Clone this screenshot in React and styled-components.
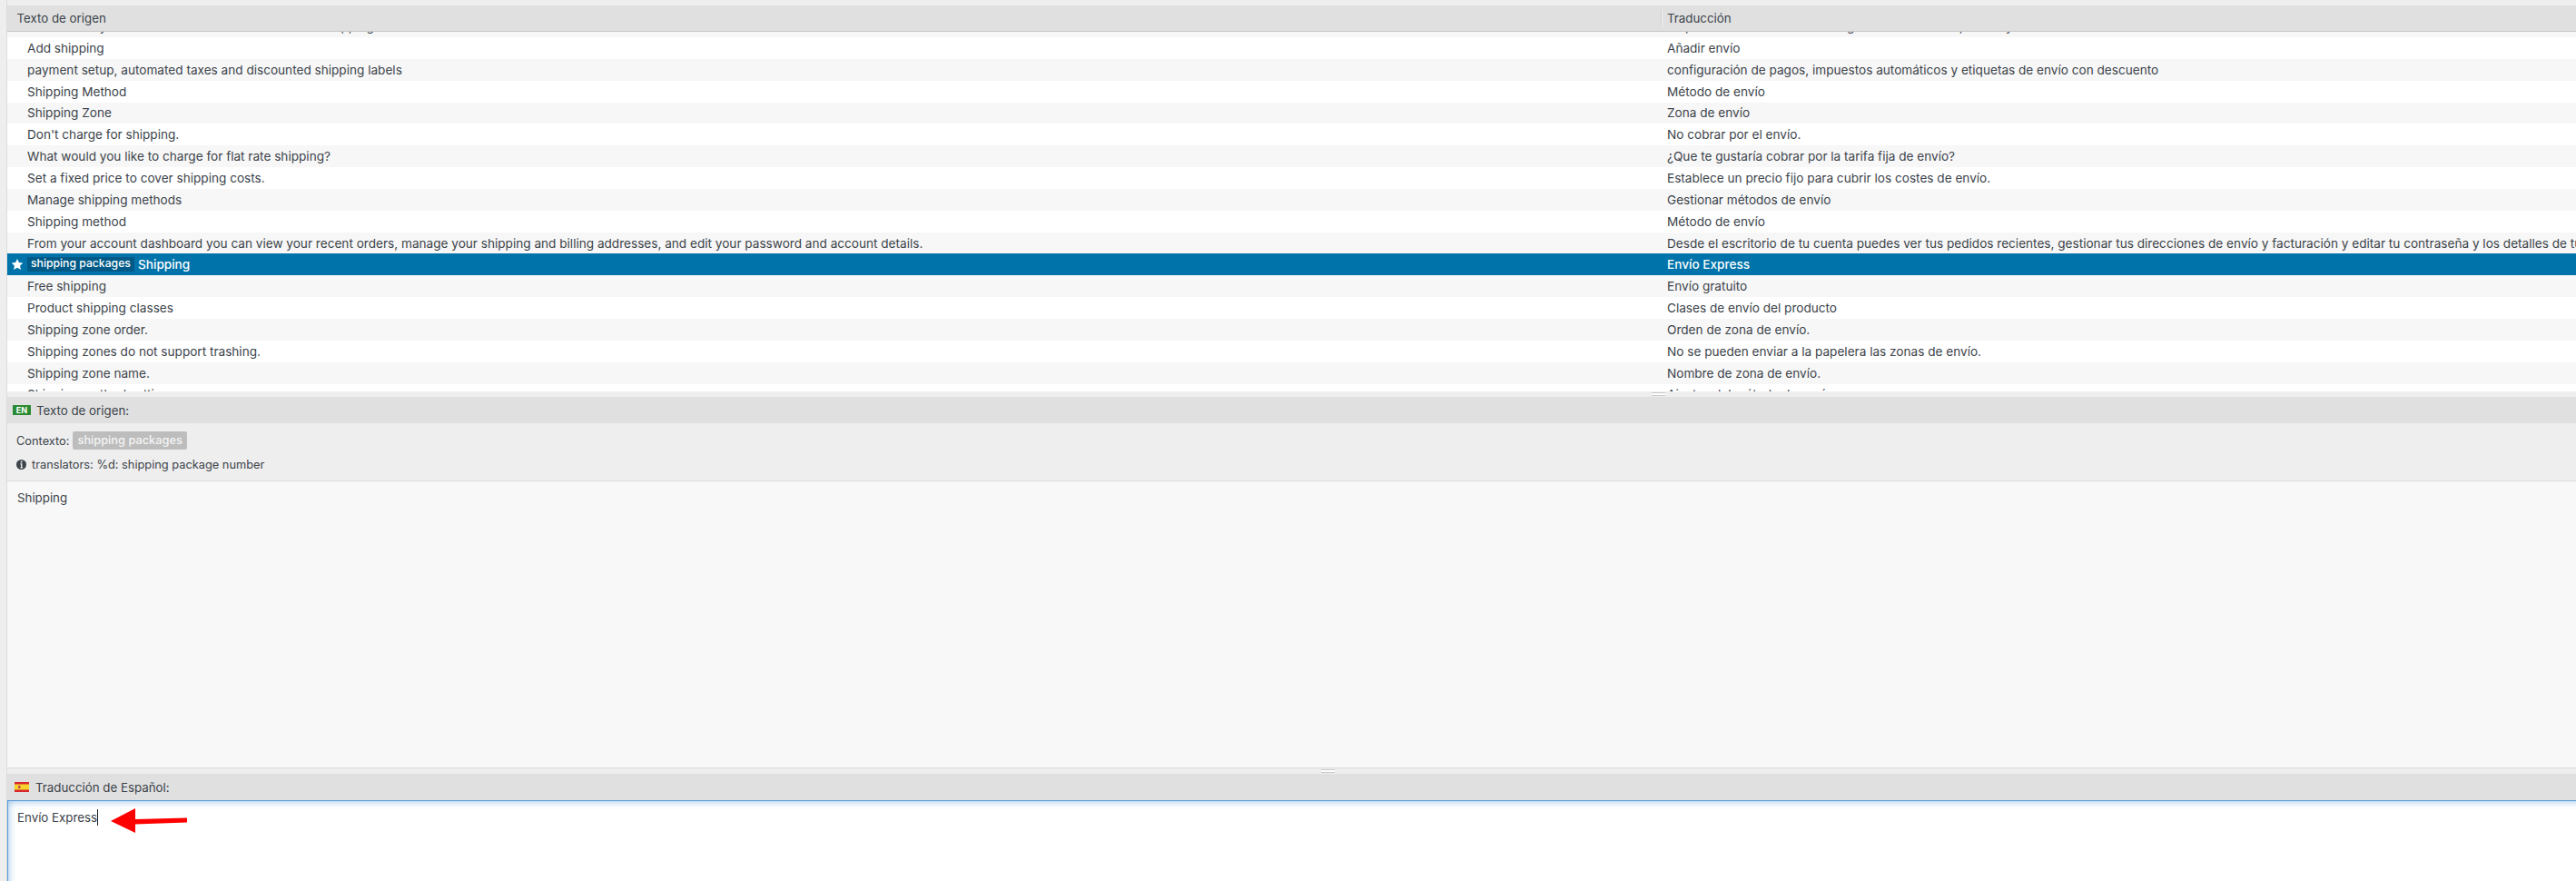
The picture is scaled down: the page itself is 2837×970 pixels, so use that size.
import React from 'react';
import styled, { createGlobalStyle } from 'styled-components';

const ROWS = [
  [
    'Decide how you like to add costs to each order for shipping and the total at checkout',
    'Empieza a vender en toda la región con tarifas de precios y los métodos de envío en cada zona',
  ],
  ['Add shipping', 'Añadir envío'],
  ['payment setup, automated taxes and discounted shipping labels', 'configuración de pagos, impuestos automáticos y etiquetas de envío con descuento'],
  ['Shipping Method', 'Método de envío'],
  ['Shipping Zone', 'Zona de envío'],
  ["Don't charge for shipping.", 'No cobrar por el envío.'],
  ['What would you like to charge for flat rate shipping?', '¿Que te gustaría cobrar por la tarifa fija de envío?'],
  ['Set a fixed price to cover shipping costs.', 'Establece un precio fijo para cubrir los costes de envío.'],
  ['Manage shipping methods', 'Gestionar métodos de envío'],
  ['Shipping method', 'Método de envío'],
  [
    'From your account dashboard you can view your recent orders, manage your shipping and billing addresses, and edit your password and account details.',
    'Desde el escritorio de tu cuenta puedes ver tus pedidos recientes, gestionar tus direcciones de envío y facturación y editar tu contraseña y los detalles de tu cuenta.',
  ],
  ['Shipping', 'Envío Express', 'shipping packages'],
  ['Free shipping', 'Envío gratuito'],
  ['Product shipping classes', 'Clases de envío del producto'],
  ['Shipping zone order.', 'Orden de zona de envío.'],
  ['Shipping zones do not support trashing.', 'No se pueden enviar a la papelera las zonas de envío.'],
  ['Shipping zone name.', 'Nombre de zona de envío.'],
  ['Shipping method settings', 'Ajustes del método de envío'],
];

const GlobalStyle = createGlobalStyle`
  html, body {
    margin: 0;
    padding: 0;
    overflow: hidden;
    background: #eeeeee;
  }
`;

const Page = styled.div`
  display: flex;
  width: 2837px;
  height: 970px;
  overflow: hidden;
  font-family: Inter, 'Noto Sans', sans-serif;
  font-size: 13.3px;
  color: #3c434a;
`;

const Gutter = styled.div`
  flex: 0 0 7px;
  background: #eeeeee;
  border-right: 1px solid #dcdcdc;
`;

const Main = styled.div`
  flex: 1;
  min-width: 0;
  display: flex;
  flex-direction: column;
  padding-top: 6px;
  overflow: hidden;
`;

const GridHeader = styled.div`
  flex: 0 0 28px;
  display: grid;
  grid-template-columns: 1821px 1fr;
  align-items: center;
  background: #e0e0e0;
  border-bottom: 1px solid #c6c6c6;
  box-sizing: content-box;
`;

const HeadCell = styled.div`
  padding-left: ${(props) => props.$pad}px;
  height: 100%;
  display: flex;
  align-items: center;
  position: relative;
  ${(props) =>
    props.$divided &&
    `
    &::before {
      content: '';
      position: absolute;
      left: 0;
      top: 5px;
      bottom: 5px;
      width: 1px;
      background: #f4f4f4;
      border-left: 1px solid #cfcfcf;
    }
  `}
`;

const List = styled.div`
  flex: 0 0 396px;
  overflow: hidden;
  background: #ffffff;
  font-size: 13.6px;
`;

const Row = styled.div`
  display: grid;
  grid-template-columns: 1821px 1fr;
  align-items: center;
  height: 23.85px;
  white-space: nowrap;
  background: ${(props) =>
    props.$selected ? '#0073aa' : props.$odd ? '#f7f7f7' : '#ffffff'};
  color: ${(props) => (props.$selected ? '#ffffff' : 'inherit')};
  font-weight: ${(props) => (props.$selected ? 500 : 400)};

  &:first-child {
    margin-top: -17.85px;
  }
`;

const SourceCell = styled.div`
  display: flex;
  align-items: center;
  padding-left: 22px;
  position: relative;
  overflow: hidden;
`;

const TargetCell = styled.div`
  padding-left: 7px;
  overflow: hidden;
`;

const StarIcon = styled.svg`
  position: absolute;
  left: 4px;
  top: 50%;
  margin-top: -7.5px;
  width: 14px;
  height: 14px;
  fill: #ffffff;
`;

const ContextTag = styled.span`
  flex: none;
  box-sizing: border-box;
  width: 118px;
  height: 17px;
  margin-right: 4px;
  margin-top: -2px;
  padding-left: 4px;
  border-radius: 2px;
  background: #005a87;
  font-size: 12.2px;
  line-height: 16px;
  font-weight: 500;
`;

const Handle = styled.div`
  flex: 0 0 6px;
  display: flex;
  padding-left: ${(props) => props.$left}px;
  background: #eeeeee;
`;

const Grip = styled.span`
  width: 15px;
  height: 2px;
  margin-top: 1px;
  border-top: 1px solid #c8c8c8;
  border-bottom: 1px solid #c8c8c8;
  background: #ffffff;
`;

const PanelTitle = styled.div`
  flex: 0 0 29px;
  display: flex;
  align-items: center;
  gap: 6px;
  padding-left: ${(props) => props.$pad}px;
  background: #e0e0e0;
`;

const LangBadge = styled.span`
  width: 20px;
  height: 11px;
  background: #2a8a33;
  color: #ffffff;
  font-size: 9px;
  font-weight: 700;
  line-height: 11px;
  text-align: center;
`;

const FlagIcon = styled.svg`
  width: 16px;
  height: 11px;
  margin-right: 1px;
`;

const Meta = styled.div`
  flex: 0 0 64px;
  box-sizing: border-box;
  display: flex;
  flex-direction: column;
  padding: 9px 0 0 10px;
  background: #eeeeee;
  border-bottom: 1px solid #dcdcdc;
  font-size: 12.8px;
`;

const MetaLine = styled.div`
  display: flex;
  align-items: center;
  gap: 4px;
  height: ${(props) => props.$height}px;
  margin-bottom: ${(props) => props.$gap || 0}px;
`;

const MetaTag = styled.span`
  padding: 0 5px;
  height: 20px;
  line-height: 20px;
  border-radius: 2px;
  background: #bdbdbd;
  color: #f4f4f4;
  font-weight: 500;
`;

const InfoIcon = styled.svg`
  width: 11px;
  height: 11px;
  margin-right: 2px;
  fill: #3c434a;
`;

const SourceBody = styled.div`
  flex: 0 0 316px;
  box-sizing: border-box;
  padding: 10px 0 0 11px;
  background: #f8f8f8;
  border-bottom: 1px solid #dcdcdc;
`;

const Editor = styled.div`
  flex: 0 0 120px;
  position: relative;
  margin-right: -20px;
  padding: 9px 0 0 10px;
  background: #ffffff;
  border-top: 1px solid #5b9dd9;
  border-left: 1px solid #5b9dd9;
  box-shadow: inset 0 0 9px rgba(91, 157, 217, 0.7);
  line-height: 18px;
`;

const Caret = styled.span`
  display: inline-block;
  width: 1px;
  height: 18px;
  vertical-align: top;
  background: #1e1e1e;
`;

const ArrowMark = styled.svg`
  position: absolute;
  left: 113px;
  top: 7px;
  width: 90px;
  height: 30px;
  fill: #ff0000;
`;

export default function App() {
  return (
    <Page>
      <GlobalStyle />
      <Gutter />
      <Main>
        <GridHeader>
          <HeadCell $pad={10.5}>Texto de origen</HeadCell>
          <HeadCell $pad={7} $divided>
            Traducción
          </HeadCell>
        </GridHeader>
        <List>
          {ROWS.map(([source, target, context], i) => (
            <Row key={i} $odd={i % 2 === 0} $selected={Boolean(context)}>
              <SourceCell>
                {context && (
                  <>
                    <StarIcon viewBox="0 0 24 24">
                      <path d="M12 1.5l3.3 6.9 7.5 1-5.5 5.2 1.4 7.5-6.7-3.6-6.7 3.6 1.4-7.5L1.2 9.4l7.5-1z" />
                    </StarIcon>
                    <ContextTag>{context}</ContextTag>
                  </>
                )}
                {source}
              </SourceCell>
              <TargetCell>{target}</TargetCell>
            </Row>
          ))}
        </List>
        <Handle $left={1810.5}>
          <Grip />
        </Handle>
        <PanelTitle $pad={6}>
          <LangBadge>EN</LangBadge>
          Texto de origen:
        </PanelTitle>
        <Meta>
          <MetaLine $height={20} $gap={7}>
            Contexto:
            <MetaTag>shipping packages</MetaTag>
          </MetaLine>
          <MetaLine $height={18}>
            <InfoIcon viewBox="0 0 24 24">
              <path
                fillRule="evenodd"
                d="M12 0a12 12 0 1 1 0 24a12 12 0 0 1 0-24zM9.500 9.500v2.500h1.500v6h-1.500v2.500h6v-2.500H14V9.500zM10.500 3.500v4h3.500v-4z"
              />
            </InfoIcon>
            translators: %d: shipping package number
          </MetaLine>
        </Meta>
        <SourceBody>Shipping</SourceBody>
        <Handle $left={1447}>
          <Grip />
        </Handle>
        <PanelTitle $pad={8}>
          <FlagIcon viewBox="0 0 16 11">
            <rect width="16" height="11" fill="#d8262c" />
            <rect y="2.500" width="16" height="6" fill="#f6d32d" />
            <rect x="4" y="4" width="2.500" height="3" fill="#c0504d" />
          </FlagIcon>
          Traducción de Español:
        </PanelTitle>
        <Editor>
          Envío Express
          <Caret />
          <ArrowMark viewBox="0 0 90 30">
            <path d="M0 15 L27 1 L27 13 L84 11.500 L84 16.500 L27 18.500 L27 28 Z" />
          </ArrowMark>
        </Editor>
      </Main>
    </Page>
  );
}
